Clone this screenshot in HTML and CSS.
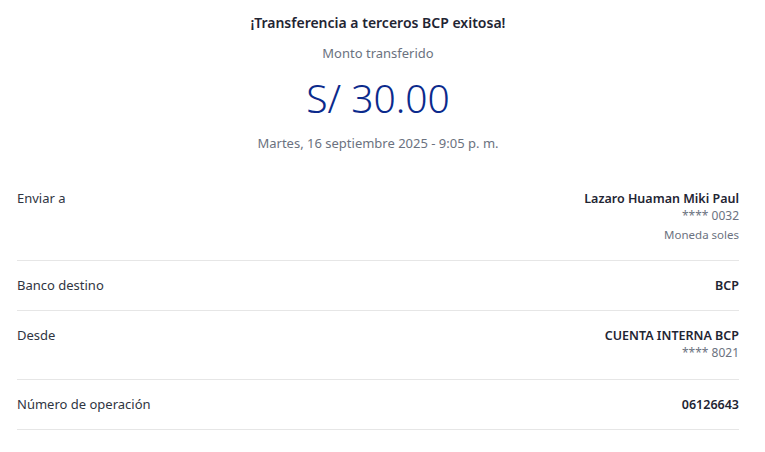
FILE: index.html
```html
<!DOCTYPE html>
<html lang="es">
<head>
<meta charset="utf-8">
<link rel="stylesheet" href="styles.css">
</head>
<body>
<main class="receipt">
  <header class="summary">
    <h1 class="title">¡Transferencia a terceros BCP exitosa!</h1>
    <p class="caption">Monto transferido</p>
    <p class="amount">S/ 30.00</p>
    <p class="date">Martes, 16 septiembre 2025 - 9:05 p. m.</p>
  </header>
  <section class="details">
    <div class="row">
      <span class="label">Enviar a</span>
      <div class="value">
        <span class="main">Lazaro Huaman Miki Paul</span>
        <span class="sub">**** 0032</span>
        <span class="sub">Moneda soles</span>
      </div>
    </div>
    <div class="row">
      <span class="label">Banco destino</span>
      <div class="value"><span class="main">BCP</span></div>
    </div>
    <div class="row">
      <span class="label">Desde</span>
      <div class="value">
        <span class="main">CUENTA INTERNA BCP</span>
        <span class="sub">**** 8021</span>
      </div>
    </div>
    <div class="row">
      <span class="label">Número de operación</span>
      <div class="value"><span class="main">06126643</span></div>
    </div>
  </section>
</main>
</body>
</html>
```

FILE: styles.css
```css
* { box-sizing: border-box; }
html, body { margin: 0; padding: 0; background: #ffffff; }
body {
  font-family: "Noto Sans", "Open Sans", Arial, sans-serif;
  color: #1f2533;
  width: 765px;
  height: 452px;
  overflow: hidden;
}
.receipt {
  padding: 0 26px 0 17px;
}
.summary {
  display: flex;
  flex-direction: column;
  align-items: center;
  padding-top: 13px;
}
.title {
  margin: 0;
  font-size: 14px;
  font-weight: 600;
  line-height: 20px;
  color: #1f2533;
}
.caption {
  margin: 11px 0 0;
  font-size: 13px;
  line-height: 18px;
  color: #6b7280;
}
.amount {
  margin: 11px 0 0;
  font-size: 39px;
  font-weight: 300;
  line-height: 50px;
  color: #0b2a8c;
}
.date {
  margin: 11px 0 0;
  font-size: 13px;
  line-height: 18px;
  color: #6b7280;
}
.details {
  margin-top: 22px;
}
.row {
  display: flex;
  justify-content: space-between;
  align-items: flex-start;
  padding: 16px 0;
  border-bottom: 1px solid #e6e6e6;
}
.label {
  font-size: 13px;
  line-height: 17px;
  color: #2f3542;
}
.value {
  display: flex;
  flex-direction: column;
  align-items: flex-end;
}
.main {
  font-size: 12.5px;
  font-weight: 600;
  line-height: 17px;
  color: #1f2533;
}
.sub {
  font-size: 12px;
  line-height: 18.5px;
  color: #6b7280;
}
.sub + .sub { font-size: 11.5px; }
```
